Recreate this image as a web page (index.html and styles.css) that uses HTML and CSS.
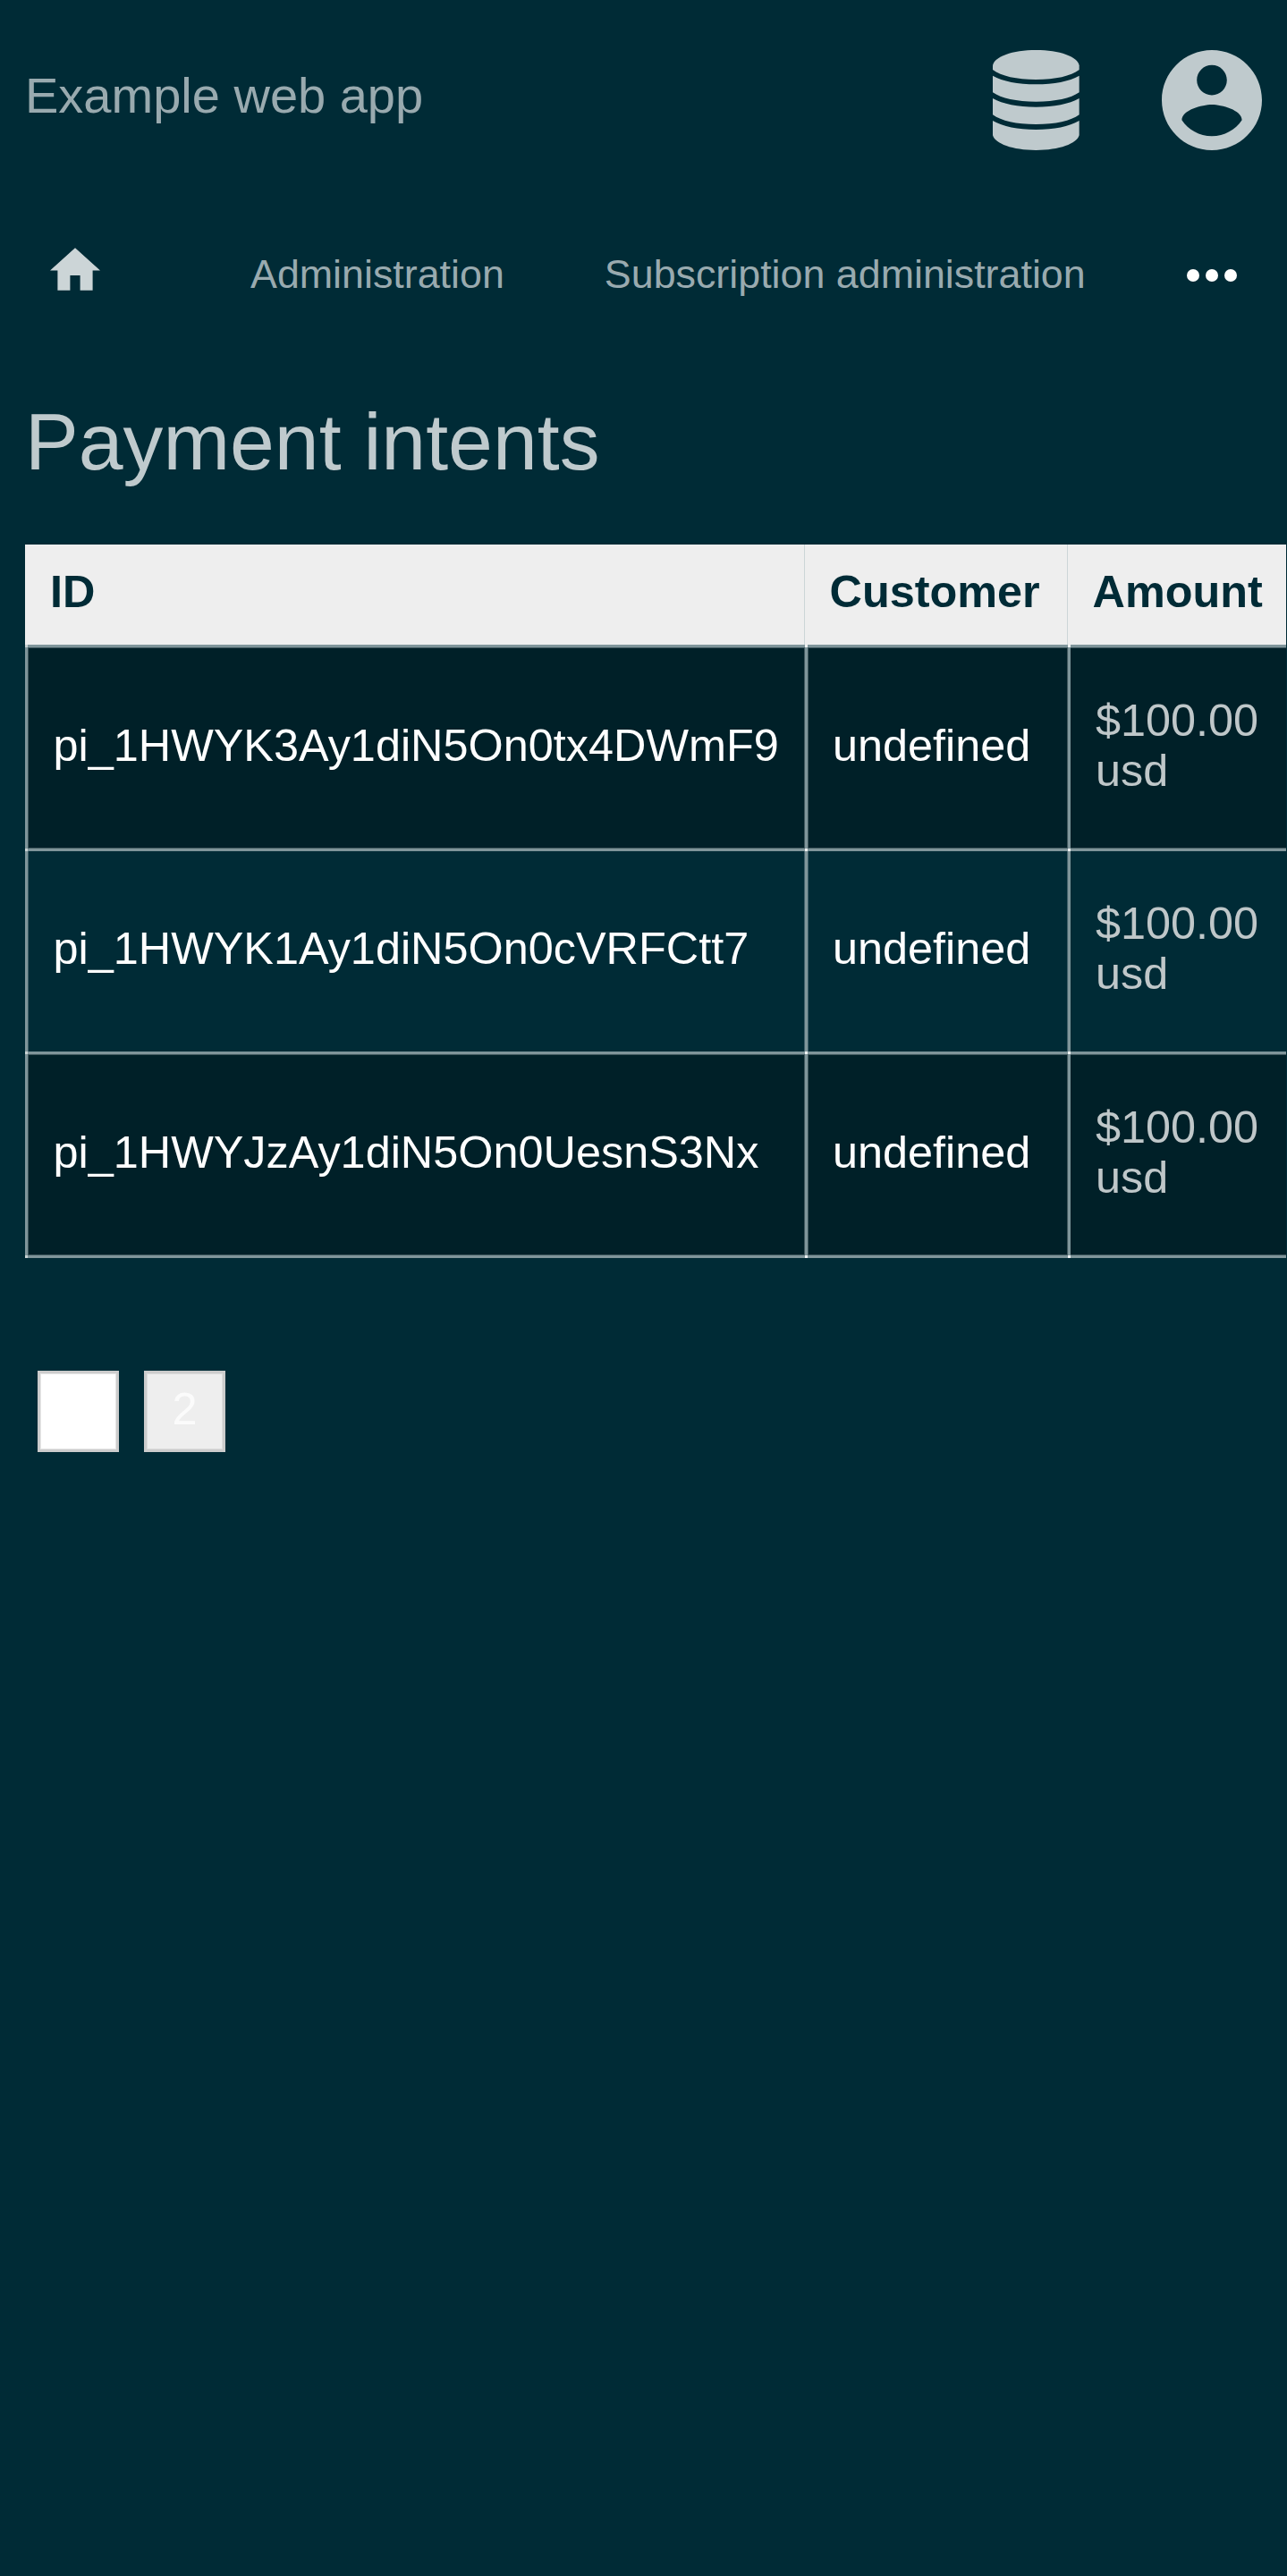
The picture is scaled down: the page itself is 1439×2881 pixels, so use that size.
FILE: index.html
```html
<!DOCTYPE html>
<html lang="en">
<head>
<meta charset="utf-8">
<title>Payment intents</title>
<link rel="stylesheet" href="styles.css">
</head>
<body>
<header class="header">
  <div class="brand">Example web app</div>
  <div class="menus">
    <svg class="database" viewBox="0 0 290 336" aria-label="Database">
      <path d="M0 52C4 22 66 0 145 0S286 22 290 52V66C262 87 210 99 145 99S28 87 0 66Z"/>
      <path d="M0 86C34 105 84 115 145 115S256 105 290 86V142C262 162 210 173 145 173S28 162 0 142Z"/>
      <path d="M0 162C34 181 84 191 145 191S256 181 290 162V217C262 238 210 249 145 249S28 238 0 217Z"/>
      <path d="M0 237C34 257 84 267 145 267S256 257 290 237V286C282 314 224 336 145 336S8 314 0 286Z"/>
    </svg>
    <svg class="account" viewBox="2 2 20 20" aria-label="Account">
      <path d="M12 2C6.48 2 2 6.48 2 12s4.48 10 10 10 10-4.48 10-10S17.52 2 12 2zm0 3c1.66 0 3 1.34 3 3s-1.34 3-3 3-3-1.34-3-3 1.34-3 3-3zm0 14.2c-2.5 0-4.71-1.28-6-3.22.03-1.99 4-3.08 6-3.08 1.99 0 5.97 1.09 6 3.08-1.29 1.94-3.5 3.22-6 3.22z"/>
    </svg>
  </div>
</header>
<nav class="nav">
  <svg class="home" viewBox="2 3 20 17" aria-label="Home"><path d="M10 20v-6h4v6h5v-8h3L12 3 2 12h3v8z"/></svg>
  <a class="nav-link">Administration</a>
  <a class="nav-link">Subscription administration</a>
  <svg class="more" viewBox="0 0 56 14" aria-label="More"><circle cx="7" cy="7" r="7"/><circle cx="28" cy="7" r="7"/><circle cx="49" cy="7" r="7"/></svg>
</nav>
<main>
  <h1 class="title">Payment intents</h1>
  <table class="intents">
    <colgroup><col class="col-id"><col class="col-customer"><col class="col-amount"></colgroup>
    <thead><tr><th>ID</th><th>Customer</th><th>Amount</th></tr></thead>
    <tbody>
      <tr><td>pi_1HWYK3Ay1diN5On0tx4DWmF9</td><td>undefined</td><td class="amount">$100.00 usd</td></tr>
      <tr><td>pi_1HWYK1Ay1diN5On0cVRFCtt7</td><td>undefined</td><td class="amount">$100.00 usd</td></tr>
      <tr><td>pi_1HWYJzAy1diN5On0UesnS3Nx</td><td>undefined</td><td class="amount">$100.00 usd</td></tr>
    </tbody>
  </table>
  <div class="pages">
    <a class="page current"></a>
    <a class="page">2</a>
  </div>
</main>
</body>
</html>
```
FILE: styles.css
```css
* { box-sizing: border-box; }
html { background: #002b36; }
body {
  margin: 0;
  min-height: 2881px;
  overflow: hidden;
  background: #002b36;
  color: #fff;
  font: 50.4px/56px "Liberation Sans", Arial, sans-serif;
}
svg { display: block; flex: none; }

.header {
  display: flex;
  justify-content: space-between;
  height: 224px;
  padding: 56px 28.5px 0 28px;
}
.brand {
  padding-top: 19px;
  font-size: 56px;
  line-height: 64px;
  color: #99aaaf;
}
.menus { display: flex; gap: 92px; fill: #bfcacd; }
.database { width: 96.67px; height: 112px; }
.account { width: 112px; height: 112px; }

.nav {
  display: flex;
  align-items: flex-start;
  height: 165px;
  padding: 53px 56px 0;
}
.home { width: 56px; height: 48px; margin-right: 168px; fill: #ccd5d7; }
.nav-link {
  padding-top: 1px;
  margin-right: 112px;
  font-size: 44.8px;
  color: #99aaaf;
  white-space: nowrap;
}
.more { width: 56px; height: 14px; margin: 24px 0 0 auto; fill: #fff; }

.title {
  margin: 0;
  padding: 55px 28px 0;
  height: 220px;
  font-size: 89.6px;
  line-height: 100px;
  font-weight: 400;
  color: #bfcacd;
}

.intents {
  width: 1410px;
  margin-left: 28px;
  table-layout: fixed;
  border-spacing: 0;
}
.col-id { width: 872px; }
.col-customer { width: 294px; }
.col-amount { width: 244px; }
th {
  height: 112px;
  padding: 0 0 6px 28px;
  background: #eee;
  color: #002b36;
  text-align: left;
}
th + th { padding-left: 27.5px; }
th:not(:last-child) { box-shadow: inset -1px 0 #ccd5d7; }
td {
  position: relative;
  height: 227px;
  padding: 0 0 6px 28px;
  border-left: 3px solid #7f959a;
  border-top: 3px solid #7f959a;
  box-shadow: inset 1px 0 #40606a, inset -1px 0 #40606a;
}
td:first-child { padding-left: 28.5px; }
tbody tr:first-child td { height: 228px; padding-bottom: 5px; }
tbody tr:last-child td { height: 231px; padding-bottom: 5px; border-bottom: 3px solid #7f959a; }
tbody tr:nth-child(odd) td {
  background: #002028;
  box-shadow: inset 1px 1px #40585e, inset -1px -1px #40585e;
}
tbody tr td:last-child { box-shadow: none; }
tbody tr:nth-child(odd) td:last-child { box-shadow: inset 0 1px #40585e, inset 0 -1px #40585e; }

td::before,
tbody tr:last-child td::after {
  content: "";
  position: absolute;
  top: -3px;
  left: -3px;
  width: 3px;
  height: 3px;
  background: #eef1f2;
}
tbody tr:last-child td::after { top: auto; bottom: -3px; }
tbody td:first-child::before,
tbody tr:last-child td:first-child::after { background: #c8d1d3; }
td.amount { color: #bfc7c9; padding-right: 28px; }

.pages { display: flex; gap: 28px; padding: 126px 42px 0; }
.page {
  width: 91px;
  height: 91px;
  padding-top: 12px;
  border: 3px solid #ccc;
  box-shadow: inset 0 0 0 1px #dcdcdc;
  background: #eee;
  color: #fbfbfb;
  text-align: center;
}
.page.current { background: #fff; box-shadow: inset 0 0 0 1px #e6e6e6; }
```
